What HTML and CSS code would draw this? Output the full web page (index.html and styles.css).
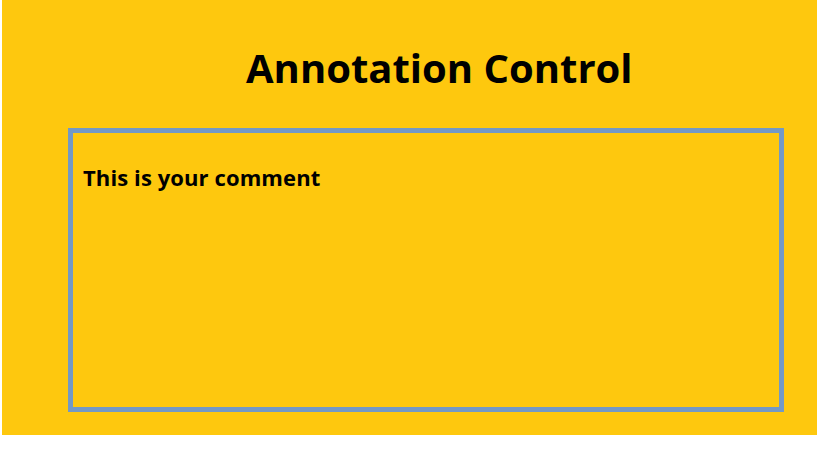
FILE: index.html
```html
<!DOCTYPE html>
<html>
<head>
<meta charset="utf-8">
<link rel="stylesheet" href="styles.css">
</head>
<body>
<div class="panel">
  <h1 class="title">Annotation Control</h1>
  <div class="comment-box">
    <p class="comment">This is your comment</p>
  </div>
</div>
</body>
</html>
```
FILE: styles.css
```css
html, body {
  margin: 0;
  padding: 0;
  background: #ffffff;
}
.panel {
  margin-left: 2px;
  width: 815px;
  height: 435px;
  background: #fec80e;
  box-sizing: border-box;
  padding-top: 1px;
  font-family: "Open Sans", "Noto Sans", sans-serif;
  color: #000;
}
.title {
  margin: 42px 0 0 244px;
  font-size: 40px;
  font-weight: 700;
  line-height: 50px;
  letter-spacing: 0;
}
.comment-box {
  margin: 35px 0 0 66px;
  width: 716px;
  height: 284px;
  border: 5px solid #7399c6;
  box-sizing: border-box;
  padding: 30px 0 0 10px;
}
.comment {
  margin: 0;
  font-size: 22px;
  font-weight: 700;
  line-height: 28px;
  letter-spacing: 0.1px;
}
```
